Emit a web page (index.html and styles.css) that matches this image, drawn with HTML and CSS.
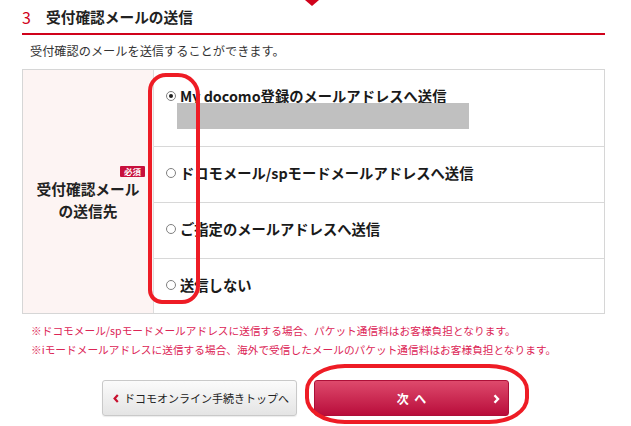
FILE: index.html
```html
<!DOCTYPE html>
<html lang="ja">
<head>
<meta charset="utf-8">
<title>受付確認メールの送信</title>
<link rel="stylesheet" href="styles.css">
</head>
<body>
<div class="page">
  <div class="topmark"></div>
  <h2 class="heading"><span class="num">3</span><span class="ttl">受付確認メールの送信</span></h2>
  <p class="lead">受付確認のメールを送信することができます。</p>
  <div class="form">
    <div class="label-cell">
      <div class="label-inner">
        <div class="req-wrap"><span class="req">必須</span></div>
        <div class="label-text">受付確認メール<br>の送信先</div>
      </div>
    </div>
    <div class="options">
      <div class="opt opt-first">
        <label class="opt-label"><span class="radio checked"></span>My docomo登録のメールアドレスへ送信</label>
        <div class="masked"></div>
      </div>
      <div class="opt">
        <label class="opt-label"><span class="radio"></span>ドコモメール/spモードメールアドレスへ送信</label>
      </div>
      <div class="opt">
        <label class="opt-label"><span class="radio"></span>ご指定のメールアドレスへ送信</label>
      </div>
      <div class="opt opt-last">
        <label class="opt-label"><span class="radio"></span>送信しない</label>
      </div>
    </div>
  </div>
  <div class="notes">
    <p>※ドコモメール/spモードメールアドレスに送信する場合、パケット通信料はお客様負担となります。</p>
    <p>※iモードメールアドレスに送信する場合、海外で受信したメールのパケット通信料はお客様負担となります。</p>
  </div>
  <div class="actions">
    <button class="btn btn-back" type="button">
      <svg class="chev chev-left" width="6" height="9" viewBox="0 0 6 9"><polyline points="4.8,1 1.6,4.5 4.8,8" fill="none" stroke="#c8102e" stroke-width="2.2"/></svg>
      <span>ドコモオンライン手続きトップへ</span>
    </button>
    <button class="btn btn-next" type="button">
      <span class="next-text">次 へ</span>
      <svg class="chev chev-right" width="7" height="10" viewBox="0 0 7 10"><polyline points="1.5,1.2 5,5 1.5,8.8" fill="none" stroke="#ffffff" stroke-width="2.4"/></svg>
    </button>
  </div>
  <div class="mark mark-radios"></div>
  <div class="mark mark-next"></div>
</div>
</body>
</html>
```

FILE: styles.css
```css
* { box-sizing: border-box; }

html, body {
  margin: 0;
  padding: 0;
  background: #ffffff;
}

body {
  font-family: "Noto Sans CJK JP", "Noto Sans", sans-serif;
  color: #222222;
}

.page {
  position: relative;
  width: 631px;
  height: 426px;
  padding-left: 22px;
  overflow: hidden;
}

.topmark {
  position: absolute;
  left: 305px;
  top: 0;
  width: 0;
  height: 0;
  border-left: 7px solid transparent;
  border-right: 7px solid transparent;
  border-top: 6px solid #d0021b;
}

.heading {
  margin: 0;
  width: 583px;
  padding: 6px 0 5px;
  border-bottom: 2px solid #d0021b;
  display: flex;
  align-items: center;
  line-height: 22px;
}

.heading .num {
  color: #d0021b;
  font-size: 16px;
  font-weight: 400;
  width: 24px;
}

.heading .ttl {
  font-size: 14.7px;
  font-weight: 700;
  color: #222222;
}

.lead {
  margin: 7px 0 9px;
  padding-left: 8px;
  font-size: 12.2px;
  line-height: 18px;
  color: #333333;
}

.form {
  display: flex;
  width: 583px;
  border: 1px solid #d6d6d6;
}

.label-cell {
  width: 131px;
  flex: none;
  background: #fdf4f3;
  border-right: 1px solid #dddddd;
  display: flex;
  align-items: center;
  justify-content: center;
  padding-top: 2px;
}

.label-inner {
  width: 100%;
  padding: 0 8px 0 10px;
}

.req-wrap {
  text-align: right;
  line-height: 11px;
  height: 11px;
  margin-bottom: 4px;
}

.req {
  display: inline-block;
  width: 25px;
  height: 11px;
  background: #c8103c;
  color: #ffffff;
  font-size: 8.5px;
  font-weight: 700;
  line-height: 11px;
  text-align: center;
  border-radius: 1px;
}

.label-text {
  text-align: center;
  font-size: 14.7px;
  font-weight: 700;
  line-height: 22px;
  color: #222222;
  padding-right: 2px;
}

.options {
  flex: 1;
  display: flex;
  flex-direction: column;
}

.opt {
  display: flex;
  flex-direction: column;
  justify-content: center;
  height: 56px;
  padding-left: 12px;
  padding-bottom: 3px;
  border-bottom: 1px solid #d8d8d8;
}

.opt-first {
  height: 77px;
  justify-content: flex-start;
  padding-top: 19px;
  padding-bottom: 0;
}

.opt-last {
  height: 54px;
  border-bottom: none;
}

.opt-label {
  display: flex;
  align-items: center;
  font-size: 14.3px;
  font-weight: 700;
  line-height: 14px;
  color: #1a1a1a;
}

.radio {
  flex: none;
  width: 10px;
  height: 10px;
  border: 1px solid #808080;
  border-radius: 50%;
  background: #ffffff;
  margin-right: 4px;
  position: relative;
}

.radio.checked::after {
  content: "";
  position: absolute;
  left: 2px;
  top: 2px;
  width: 4px;
  height: 4px;
  border-radius: 50%;
  background: #222222;
}

.masked {
  width: 292px;
  height: 26px;
  background: #c0c0c0;
  margin-left: 11px;
}

.notes {
  margin-top: 7px;
  padding-left: 9px;
}

.notes p {
  margin: 0;
  font-size: 10.7px;
  line-height: 19px;
  color: #dc2556;
}

.actions {
  display: flex;
  gap: 17px;
  margin-top: 21px;
  padding-left: 80px;
}

.btn {
  position: relative;
  width: 195px;
  height: 36px;
  border-radius: 3px;
  font-family: "Noto Sans CJK JP", "Noto Sans", sans-serif;
  display: flex;
  align-items: center;
  cursor: pointer;
  padding: 0;
}

.btn-back {
  border: 1px solid #c9c9c9;
  background: linear-gradient(#fbfbfb, #e4e4e4);
  box-shadow: 0 1px 1px rgba(0, 0, 0, 0.08);
  color: #222222;
  font-size: 11px;
  padding-left: 10px;
}

.btn-back .chev {
  margin-right: 5px;
}

.btn-next {
  border: 1px solid #ad1038;
  background: linear-gradient(#de4a6c, #b90d3b);
  color: #ffffff;
  font-size: 12px;
  font-weight: 700;
  justify-content: center;
}

.next-text {
  word-spacing: 3px;
}

.btn-next .chev-right {
  position: absolute;
  right: 8px;
  top: 13px;
}

.mark {
  position: absolute;
  border: 4px solid #ee1c25;
  pointer-events: none;
}

.mark-radios {
  left: 148px;
  top: 73px;
  width: 52px;
  height: 231px;
  border-radius: 18px 22px 18px 14px;
}

.mark-next {
  left: 305px;
  top: 364px;
  width: 224px;
  height: 60px;
  border-radius: 40px / 26px;
}
```
